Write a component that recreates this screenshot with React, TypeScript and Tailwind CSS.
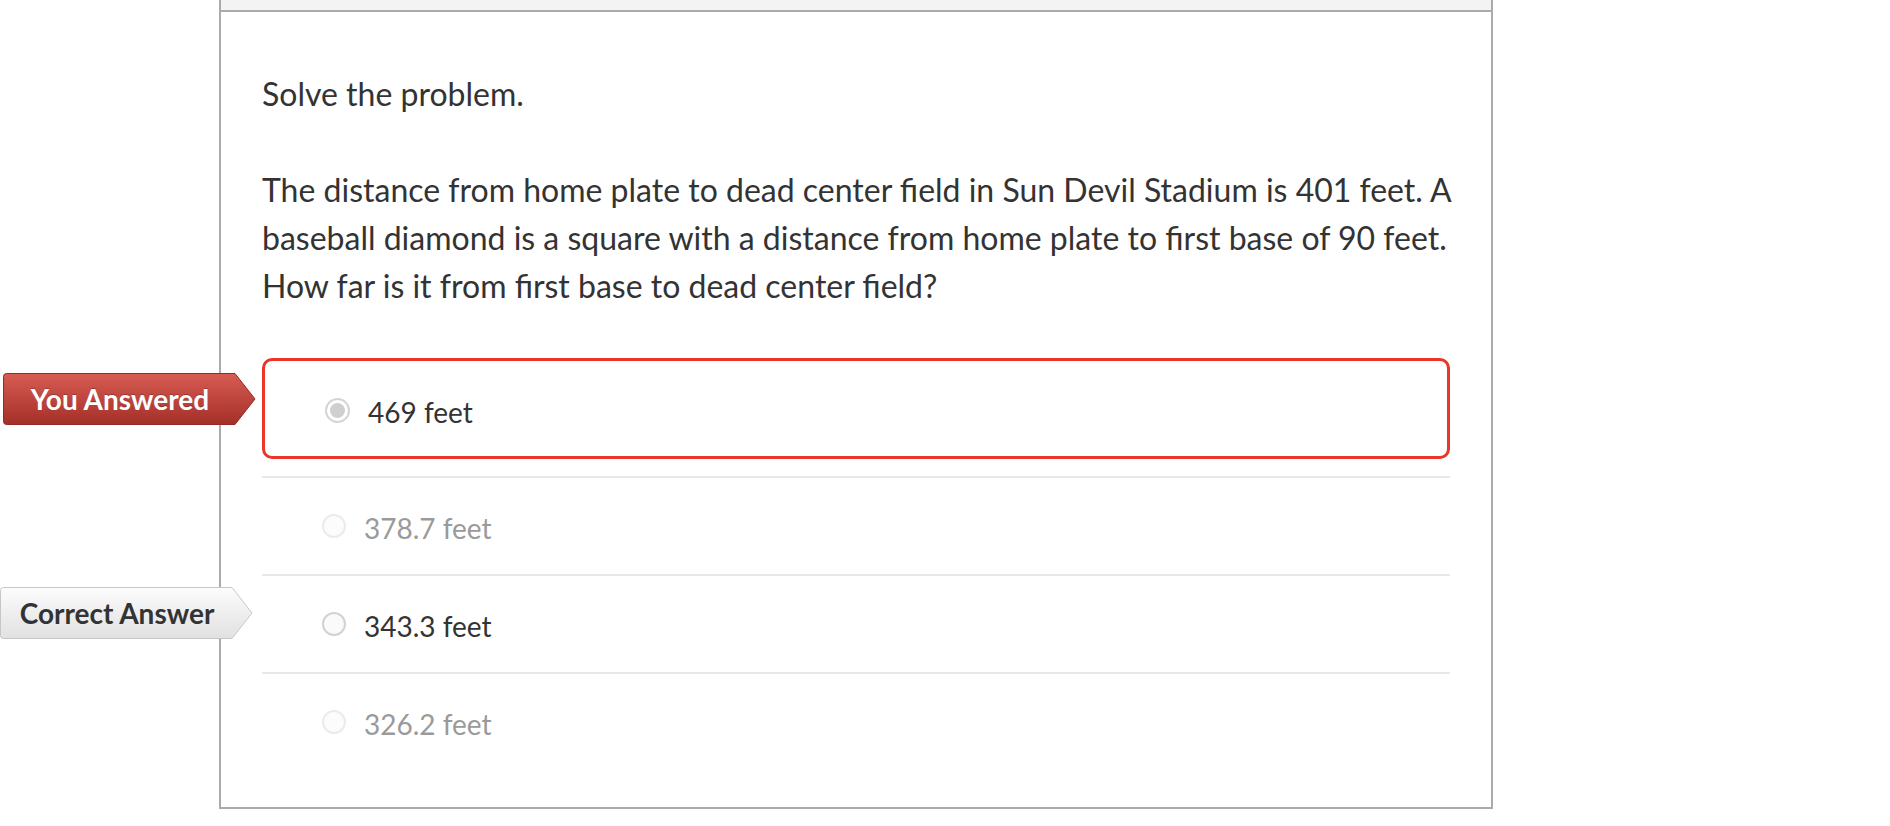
import React from "react";

function Tag({
  label,
  variant,
  className,
}: {
  label: string;
  variant: "wrong" | "correct";
  className: string;
}) {
  const wrong = variant === "wrong";
  const id = wrong ? "tagWrong" : "tagCorrect";
  return (
    <div className={`absolute ${className}`}>
      <svg width="253" height="52" viewBox="0 0 253 52" className="absolute left-0 top-0">
        <defs>
          <linearGradient id={id} x1="0" y1="0" x2="0" y2="1">
            {wrong ? (
              <>
                <stop offset="0" stopColor="#d85c52" />
                <stop offset="1" stopColor="#a42f29" />
              </>
            ) : (
              <>
                <stop offset="0" stopColor="#fcfcfc" />
                <stop offset="1" stopColor="#e1e1e1" />
              </>
            )}
          </linearGradient>
        </defs>
        <path
          d="M3.5 0.5 H232 L252 26 L232 51.5 H3.5 Q0.5 51.5 0.5 48.5 V3.5 Q0.5 0.5 3.5 0.5 Z"
          fill={`url(#${id})`}
          stroke={wrong ? "#932a24" : "#c6c6c6"}
          strokeWidth="1"
        />
      </svg>
      <span
        className={`absolute left-0 top-0 w-[234px] h-[52px] text-center leading-[52px] text-[28px] font-bold font-['Lato',sans-serif] whitespace-nowrap ${
          wrong ? "text-white [text-shadow:0_-1px_0_rgba(0,0,0,0.25)]" : "text-[#333333]"
        }`}
      >
        {label}
      </span>
    </div>
  );
}

function Radio({ state }: { state: "selected" | "normal" | "faint" }) {
  if (state === "selected") {
    return (
      <span className="flex items-center justify-center w-[25px] h-[25px] rounded-full border-2 border-[#d4d4d4] bg-white shrink-0">
        <span className="w-[15px] h-[15px] rounded-full bg-[#cfcfcf]" />
      </span>
    );
  }
  return (
    <span
      className={`w-[24px] h-[24px] rounded-full border-2 shrink-0 ${
        state === "normal" ? "border-[#d2d2d2] bg-[#fafafa]" : "border-[#ebebeb] bg-[#fcfcfc]"
      }`}
    />
  );
}

export default function App() {
  return (
    <div className="relative w-[1890px] h-[826px] bg-white font-['Lato',sans-serif] text-[#333333]">
      <div className="ml-[219px] w-[1274px] border-2 border-t-0 border-[#aaaaaa]">
        <div className="h-[12px] bg-[#f3f3f3] border-b-2 border-[#aaaaaa]" />
        <div className="px-[41px] pt-[58px] pb-[37px]">
          <div className="text-[32px] leading-[48px] whitespace-nowrap">
            <p>Solve the problem.</p>
            <p className="mt-[48px]">
              The distance from home plate to dead center field in Sun Devil Stadium is 401 feet. A
              <br />
              baseball diamond is a square with a distance from home plate to first base of 90 feet.
              <br />
              How far is it from first base to dead center field?
            </p>
          </div>

          <div className="mt-[48px]">
            <div className="relative h-[101px] mb-[17px] border-[3px] border-[#ea3628] rounded-[10px] flex items-center pl-[60px] pt-[3px]">
              <Tag label="You Answered" variant="wrong" className="left-[-262px] top-[12px] w-[253px] h-[52px]" />
              <Radio state="selected" />
              <span className="ml-[18px] mt-[3px] text-[28px] leading-none text-[#333333]">469 feet</span>
            </div>
            <div className="h-[98px] border-t-2 border-[#e8e8e8] flex items-center pl-[60px]">
              <Radio state="faint" />
              <span className="ml-[18px] mt-[3px] text-[28px] leading-none text-[#9a9a9a]">378.7 feet</span>
            </div>
            <div className="relative h-[98px] border-t-2 border-[#e8e8e8] flex items-center pl-[60px]">
              <Tag label="Correct Answer" variant="correct" className="left-[-262px] top-[11px] w-[253px] h-[52px]" />
              <Radio state="normal" />
              <span className="ml-[18px] mt-[3px] text-[28px] leading-none text-[#333333]">343.3 feet</span>
            </div>
            <div className="h-[98px] border-t-2 border-[#e8e8e8] flex items-center pl-[60px]">
              <Radio state="faint" />
              <span className="ml-[18px] mt-[3px] text-[28px] leading-none text-[#9a9a9a]">326.2 feet</span>
            </div>
          </div>
        </div>
      </div>
    </div>
  );
}
